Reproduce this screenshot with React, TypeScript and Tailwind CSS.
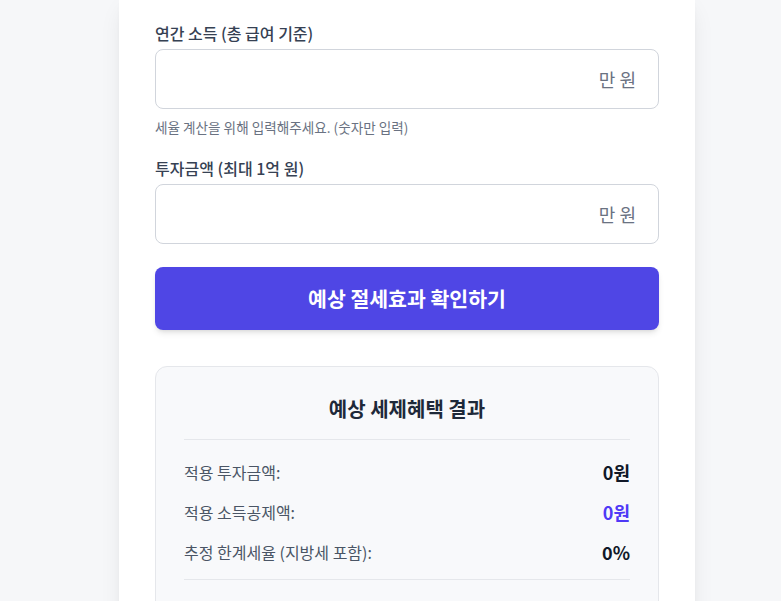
const font = { fontFamily: '"Noto Sans CJK KR", "Noto Sans", sans-serif' };

function Field({ label, help }: { label: string; help?: string }) {
  return (
    <div>
      <label className="block text-base font-medium leading-6 text-gray-700 mb-1">{label}</label>
      <div className="relative">
        <input
          type="text"
          className="w-full h-[60px] rounded-lg border border-gray-300 bg-white px-5 pr-16 text-lg outline-none"
        />
        <span className="absolute right-[23px] top-1/2 -translate-y-1/2 text-lg text-gray-500">만 원</span>
      </div>
      {help && <p className="mt-2 text-[13.6px] leading-5 text-gray-500">{help}</p>}
    </div>
  );
}

function Row({ label, value, accent }: { label: string; value: string; accent?: boolean }) {
  return (
    <div className="flex items-center justify-between h-[40px]">
      <span className="text-base text-gray-600">{label}</span>
      <span className={accent ? "text-lg font-bold text-indigo-600" : "text-lg font-bold text-gray-900"}>{value}</span>
    </div>
  );
}

export default function App() {
  return (
    <div className="min-h-screen bg-[#f6f7f9]" style={font}>
      <div className="ml-[119px] w-[576px] -mt-[15px] rounded-2xl bg-white px-9 pt-9 pb-10 shadow-xl">
        <Field label="연간 소득 (총 급여 기준)" help="세율 계산을 위해 입력해주세요. (숫자만 입력)" />
        <div className="mt-[19px]">
          <Field label="투자금액 (최대 1억 원)" />
        </div>
        <button className="mt-[23px] w-full h-[63px] rounded-lg bg-[#4f46e5] text-[20.5px] font-bold text-white shadow-md">
          예상 절세효과 확인하기
        </button>

        <div className="mt-9 rounded-xl border border-gray-200 bg-[#f8f9fb] px-7 pt-7 pb-8">
          <h2 className="text-center text-xl font-bold text-gray-800 pb-4 border-b border-gray-200">예상 세제혜택 결과</h2>
          <div className="pt-3 pb-[7px] border-b border-gray-200">
            <Row label="적용 투자금액:" value="0원" />
            <Row label="적용 소득공제액:" value="0원" accent />
            <Row label="추정 한계세율 (지방세 포함):" value="0%" />
          </div>
          <div className="h-24" />
        </div>
      </div>
    </div>
  );
}
